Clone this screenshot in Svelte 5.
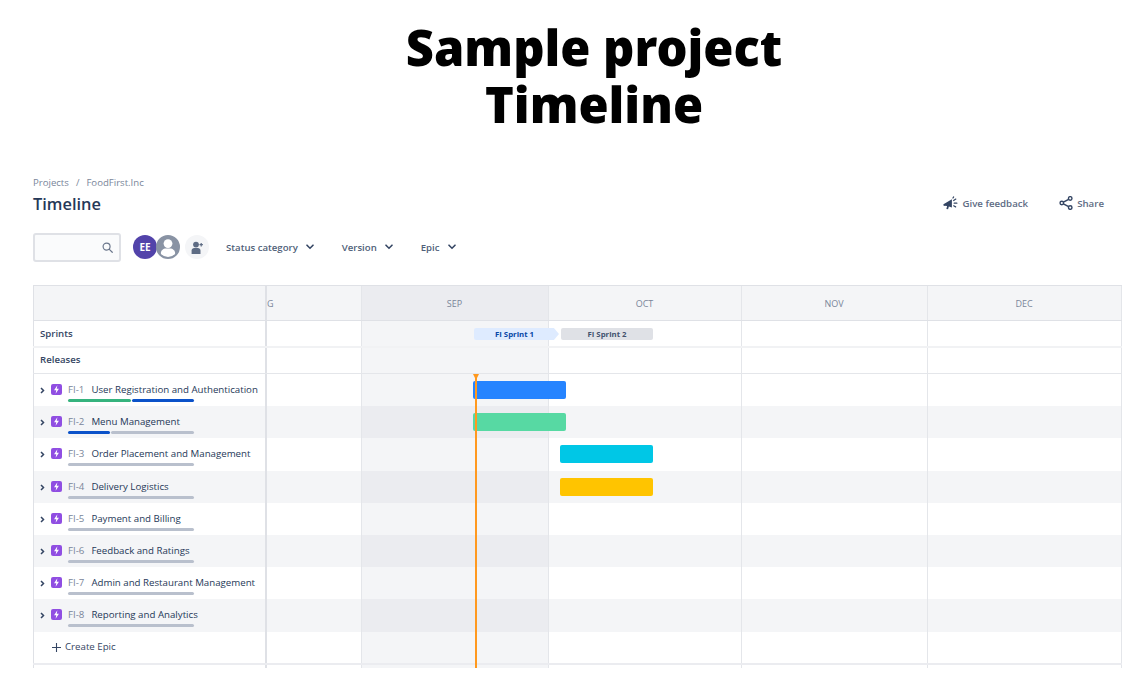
<script>
  const months = [
    { label: 'G', cls: 'aug' },
    { label: 'SEP', cls: 'sep' },
    { label: 'OCT', cls: '' },
    { label: 'NOV', cls: '' },
    { label: 'DEC', cls: '' }
  ];
  const G = '#36b37e', B = '#0b52c9', N = '#b9c0cd';
  const epics = [
    { id: 'FI-1', name: 'User Registration and Authentication', prog: [[63, G], [62, B]], bar: { left: 206, width: 93, color: '#2684ff' } },
    { id: 'FI-2', name: 'Menu Management', prog: [[42, B], [83, N]], bar: { left: 206, width: 93, color: '#57d9a3' } },
    { id: 'FI-3', name: 'Order Placement and Management', prog: [[126, N]], bar: { left: 293, width: 93, color: '#00c7e6' } },
    { id: 'FI-4', name: 'Delivery Logistics', prog: [[126, N]], bar: { left: 293, width: 93, color: '#ffc400' } },
    { id: 'FI-5', name: 'Payment and Billing', prog: [[126, N]] },
    { id: 'FI-6', name: 'Feedback and Ratings', prog: [[126, N]] },
    { id: 'FI-7', name: 'Admin and Restaurant Management', prog: [[126, N]] },
    { id: 'FI-8', name: 'Reporting and Analytics', prog: [[126, N]] }
  ];
</script>

<div class="page">
  <h1>Sample project<br />Timeline</h1>

  <header class="head">
    <div>
      <div class="crumbs"><span>Projects</span><i>/</i><span>FoodFirst.Inc</span></div>
      <div class="pagetitle">Timeline</div>
    </div>
    <div class="actions">
      <span class="action">
        <svg width="16" height="15" viewBox="0 0 18 16"><path d="M1 8.6 10 3.2v9.2L6.6 11.4l-.9 3.2-1.9-.5.8-3.2-2.6-.3a1.1 1.1 0 0 1-1-2Z" fill="#344563"/><path d="M12 4.6 14.4 3M12.6 7.6h3M12 10.6l2.2 1.2M11.2 1.8 12 .6" stroke="#344563" stroke-width="1.4" fill="none" stroke-linecap="round"/></svg>
        Give feedback
      </span>
      <span class="action share">
        <svg width="14" height="14" viewBox="0 0 15 15" fill="none" stroke="#344563" stroke-width="1.5"><circle cx="3" cy="7.5" r="1.9"/><circle cx="12" cy="2.6" r="1.9"/><circle cx="12" cy="12.4" r="1.9"/><path d="M4.7 6.6 10.3 3.5M4.7 8.4l5.6 3.1"/></svg>
        Share
      </span>
    </div>
  </header>

  <div class="filters">
    <div class="search">
      <svg width="11" height="11" viewBox="0 0 12 12" fill="none" stroke="#6b778c" stroke-width="1.3"><circle cx="5" cy="5" r="3.8"/><path d="m8 8 3.2 3.2" stroke-linecap="round"/></svg>
    </div>
    <div class="avatars">
      <span class="av ee">EE</span>
      <span class="av anon">
        <svg width="20" height="20" viewBox="0 0 20 20"><circle cx="10" cy="6.6" r="4.4" fill="#fff"/><path d="M2.8 20v-3.6c0-3 2.4-5 5.2-5h4c2.8 0 5.2 2 5.2 5V20Z" fill="#fff"/></svg>
      </span>
    </div>
    <span class="addp">
      <svg width="13" height="13" viewBox="0 0 13 13" fill="#5e6c84"><circle cx="5" cy="3.6" r="2.9"/><path d="M.6 13V9.6C.6 8 1.8 7 3.2 7h3.6c1.5 0 2.7 1 2.7 2.6V13Z"/><path d="M10.2 2v3.4M8.5 3.7h3.4" stroke="#5e6c84" stroke-width="1.2"/></svg>
    </span>
    <span class="filter st">Status category
      <svg width="8" height="6" viewBox="0 0 8 6" fill="none" stroke="#344563" stroke-width="1.6"><path d="m1 1.2 3 3 3-3" stroke-linecap="round"/></svg>
    </span>
    <span class="filter ver">Version
      <svg width="8" height="6" viewBox="0 0 8 6" fill="none" stroke="#344563" stroke-width="1.6"><path d="m1 1.2 3 3 3-3" stroke-linecap="round"/></svg>
    </span>
    <span class="filter ep">Epic
      <svg width="8" height="6" viewBox="0 0 8 6" fill="none" stroke="#344563" stroke-width="1.6"><path d="m1 1.2 3 3 3-3" stroke-linecap="round"/></svg>
    </span>
  </div>

  <div class="chart">
    <div class="row hdr">
      <div class="side"></div>
      {#each months as m}
        <div class="cell {m.cls}"><span class="mlabel">{m.label}</span></div>
      {/each}
    </div>
    <div class="row sprints">
      <div class="side strong">Sprints</div>
      {#each months as m}<div class="cell {m.cls}"></div>{/each}
      <div class="sprint one">FI Sprint 1</div>
      <div class="sprint two">FI Sprint 2</div>
    </div>
    <div class="row releases">
      <div class="side strong">Releases</div>
      {#each months as m}<div class="cell {m.cls}"></div>{/each}
    </div>
    {#each epics as e, i}
      <div class="row epic" class:alt={i % 2 === 1}>
        <div class="side">
          <svg class="chev" width="5" height="7" viewBox="0 0 6 8" fill="none" stroke="#344563" stroke-width="1.8"><path d="m1.2 1 3 3-3 3" /></svg>
          <span class="icon"><svg width="11" height="11" viewBox="0 0 10 10"><path d="M5.8 1.2 2.8 5.6h2l-.6 3.2 3-4.4h-2Z" fill="#fff"/></svg></span>
          <span class="id">{e.id}</span>
          <span class="name">{e.name}</span>
          <span class="prog">
            {#each e.prog as p}<b style="width:{p[0]}px;background:{p[1]}"></b>{/each}
          </span>
        </div>
        {#each months as m}<div class="cell {m.cls}"></div>{/each}
        {#if e.bar}
          <div class="bar" style="left:{e.bar.left + 234}px;width:{e.bar.width}px;background:{e.bar.color}"></div>
        {/if}
      </div>
    {/each}
    <div class="row create">
      <div class="side">
        <svg width="9" height="9" viewBox="0 0 10 10" stroke="#344563" stroke-width="1.2"><path d="M5 0v10M0 5h10"/></svg>
        <span>Create Epic</span>
      </div>
      {#each months as m}<div class="cell {m.cls}"></div>{/each}
    </div>
    <div class="row tail">
      <div class="side"></div>
      {#each months as m}<div class="cell {m.cls}"></div>{/each}
    </div>
    <div class="today"></div>
  </div>
</div>

<style>
  :global(body) { margin: 0; background: #fff; }
  .page {
    height: 687px;
    overflow: hidden;
    font-family: "Open Sans", "Noto Sans", sans-serif;
    color: #172b4d;
  }
  h1 {
    margin: 0;
    padding: 19px 0 0 45px;
    height: 135px;
    box-sizing: border-box;
    font: 900 48.8px/57px "Noto Sans", Lato, sans-serif;
    color: #000;
    text-align: center;
  }
  .head {
    display: flex;
    justify-content: space-between;
    padding: 41px 39px 0 33px;
    height: 70px;
    box-sizing: border-box;
  }
  .crumbs { font-size: 9.6px; line-height: 14px; color: #7a869a; display: flex; gap: 7px; }
  .crumbs i { font-style: normal; }
  .pagetitle { font-size: 16.4px; line-height: 24px; margin-top: 2px; font-weight: 600; color: #253858; }
  .actions { display: flex; padding-top: 18px; height: 18px; font-size: 9.7px; font-weight: 600; color: #5e6c84; }
  .action { display: flex; align-items: center; gap: 3px; }
  .share { margin-left: 31px; gap: 4px; }
  .filters {
    display: flex;
    align-items: center;
    padding-left: 33px;
    height: 30px;
    margin-top: 27px;
  }
  .search {
    width: 88px;
    height: 29px;
    box-sizing: border-box;
    border: 2px solid #dfe1e6;
    border-radius: 3px;
    background: #fafbfc;
    display: flex;
    align-items: center;
    justify-content: flex-end;
    padding-right: 6px;
  }
  .avatars { display: flex; margin-left: 12px; }
  .av {
    width: 24px;
    height: 24px;
    border-radius: 50%;
    display: flex;
    align-items: center;
    justify-content: center;
    overflow: hidden;
  }
  .ee { background: #5243aa; color: #fff; font-size: 10px; font-weight: 700; }
  .anon { background: #8993a4; margin-left: -1px; box-sizing: border-box; border: 2px solid #8993a4; }
  .addp {
    width: 24px;
    height: 24px;
    margin-left: 5px;
    border-radius: 50%;
    background: #f4f5f7;
    display: flex;
    align-items: center;
    justify-content: center;
  }
  .filter { display: flex; align-items: center; gap: 8px; font-size: 9.6px; font-weight: 600; color: #505f79; }
  .filter.st { margin-left: 17px; }
  .filter.ver { margin-left: 28px; }
  .filter.ep { margin-left: 28px; }
  .chart {
    position: relative;
    margin: 23px 0 0 33px;
    width: 1089px;
    height: 383px;
    overflow: hidden;
    border-top: 1px solid #dfe1e6;
    box-sizing: border-box;
  }
  .row {
    position: relative;
    display: grid;
    grid-template-columns: 234px 95px 187px 193px 186px 194px;
    border-bottom: 1px solid #ebecf0;
    box-sizing: border-box;
  }
  .side {
    border-left: 1px solid #dfe1e6;
    border-right: 2px solid #dfe1e6;
    padding-left: 6px;
    display: flex;
    align-items: center;
    position: relative;
    font-size: 9.7px;
    line-height: 14px;
    box-sizing: border-box;
    white-space: nowrap;
  }
  .cell { border-right: 1px solid #e4e6ea; display: flex; align-items: center; justify-content: center; box-sizing: border-box; }
  .row .cell.sep { background: #f4f5f7; }
  .hdr { height: 35px; background: #f4f5f7; border-bottom: 1px solid #dfe1e6; }
  .hdr .cell { background: #f4f5f7; }
  .row.hdr .cell.sep { background: #ebecf0; }
  .aug { justify-content: flex-start; }
  .mlabel { font-size: 9px; color: #7a869a; margin-right: 1px; }
  .strong { font-weight: 600; color: #344563; font-size: 9.65px; }
  .sprints { height: 27px; border-bottom: 2px solid #f1f2f4; }
  .sprints .side { padding-top: 1px; }
  .releases { height: 26px; border-bottom: 1px solid #e4e6ea; }
  .releases .side { padding-bottom: 1px; }
  .epic { height: 32.2px; border-bottom: 0; }
  .epic .side { align-items: flex-start; padding-top: 9px; }
  .epic.alt { background: #f4f5f7; }
  .epic.alt .cell.sep { background: #ebecf0; }
  .chev { margin: 4px 6px 0 0; flex: none; }
  .icon {
    width: 11px;
    height: 11px;
    border-radius: 2px;
    background: #904ee2;
    flex: none;
    margin: 1px 6px 0 0;
    display: flex;
  }
  .id { color: #7a869a; margin-right: 7px; }
  .name { color: #253858; }
  .prog { position: absolute; left: 34px; top: 25px; display: flex; gap: 1px; }
  .prog b { display: block; height: 3px; border-radius: 2px; }
  .bar {
    position: absolute;
    top: 7px;
    height: 18px;
    border-radius: 2px;
    box-sizing: border-box;
  }
  .sprint {
    position: absolute;
    top: 7px;
    height: 12px;
    font-size: 7.8px;
    line-height: 12px;
    font-weight: 700;
    text-align: center;
    box-sizing: border-box;
    border-radius: 2px;
  }
  .one { left: 441px; width: 85px; padding-right: 4px; background: #deebff; color: #0747a6; clip-path: polygon(0 0, 94% 0, 100% 50%, 94% 100%, 0 100%); }
  .two { left: 528px; width: 92px; background: #dfe1e6; color: #42526e; }
  .create { height: 33px; border-bottom: 2px solid #ebecf0; }
  .create .side { padding-left: 18px; gap: 4px; color: #344563; }
  .tail { height: 8px; border-bottom: 0; }
  .today { position: absolute; left: 442px; top: 88px; bottom: 0; width: 1.5px; background: #ff991f; }
  .today::before {
    content: "";
    position: absolute;
    left: -2px;
    top: 0;
    border: 3px solid transparent;
    border-top: 6px solid #ff991f;
    border-bottom: 0;
  }
</style>
